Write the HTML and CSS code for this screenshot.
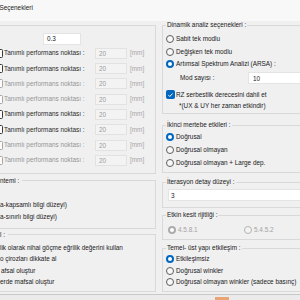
FILE: index.html
```html
<!DOCTYPE html>
<html lang="tr">
<head>
<meta charset="utf-8">
<link rel="stylesheet" href="styles.css">
</head>
<body>
<div class="header"><span class="header-title">Seçenekleri</span></div>
<div class="main">
  <div class="col-left">
    <fieldset class="box box-perf">
      <div class="top-row"><span class="field field-top">0.3</span></div>
      <div class="perf-row"><span class="check"></span><span class="perf-label">Tanımlı performans noktası :</span><span class="field field-dis">20</span><span class="unit">[mm]</span></div>
      <div class="perf-row"><span class="check"></span><span class="perf-label">Tanımlı performans noktası :</span><span class="field field-dis">20</span><span class="unit">[mm]</span></div>
      <div class="perf-row muted"><span class="check"></span><span class="perf-label">Tanımlı performans noktası :</span><span class="field field-dis">20</span><span class="unit">[mm]</span></div>
      <div class="perf-row muted"><span class="check"></span><span class="perf-label">Tanımlı performans noktası :</span><span class="field field-dis">20</span><span class="unit">[mm]</span></div>
      <div class="perf-row"><span class="check"></span><span class="perf-label">Tanımlı performans noktası :</span><span class="field field-dis">20</span><span class="unit">[mm]</span></div>
      <div class="perf-row"><span class="check"></span><span class="perf-label">Tanımlı performans noktası :</span><span class="field field-dis">20</span><span class="unit">[mm]</span></div>
      <div class="perf-row muted"><span class="check"></span><span class="perf-label">Tanımlı performans noktası :</span><span class="field field-dis">20</span><span class="unit">[mm]</span></div>
      <div class="perf-row muted"><span class="check"></span><span class="perf-label">Tanımlı performans noktası :</span><span class="field field-dis">20</span><span class="unit">[mm]</span></div>
    </fieldset>
    <fieldset class="box box-left box-method">
      <legend>ntemi :</legend>
      <div class="lrow"></div>
      <div class="lrow">a-kapsamlı bilgi düzeyi)</div>
      <div class="lrow">a-sınırlı bilgi düzeyi)</div>
    </fieldset>
    <fieldset class="box box-left box-hinge">
      <legend>l :</legend>
      <div class="hrow">lik olarak nihai göçme eğrilik değerini kullan</div>
      <div class="hrow">o çirozları dikkate al</div>
      <div class="hrow hrow-shift">afsal oluştur</div>
      <div class="hrow">erde mafsal oluştur</div>
    </fieldset>
  </div>
  <div class="col-right">
    <fieldset class="box box-right box-dyn">
      <legend>Dinamik analiz seçenekleri :</legend>
      <div class="rrow"><span class="radio"></span>Sabit tek modlu</div>
      <div class="rrow"><span class="radio"></span>Değişken tek modlu</div>
      <div class="rrow"><span class="radio on"></span>Artımsal Spektrum Analizi (ARSA) :</div>
      <div class="mod-row"><span class="mod-label">Mod sayısı :</span><span class="field field-wide">10</span></div>
      <div class="cb-row"><span class="check on"><svg viewBox="0 0 8 8" width="8" height="8"><path d="M1.6 4.1 L3.2 5.7 L6.4 2.3" fill="none" stroke="#fff" stroke-width="1.1"/></svg></span>RZ serbestlik derecesini dahil et</div>
      <div class="note-row">*(UX &amp; UY her zaman etkindir)</div>
    </fieldset>
    <fieldset class="box box-right box-second">
      <legend>İkinci mertebe etkileri :</legend>
      <div class="srow"><span class="radio on"></span>Doğrusal</div>
      <div class="srow"><span class="radio"></span>Doğrusal olmayan</div>
      <div class="srow"><span class="radio"></span>Doğrusal olmayan + Large dep.</div>
    </fieldset>
    <fieldset class="box box-right box-iter">
      <legend>İterasyon detay düzeyi :</legend>
      <div class="field field-iter">3</div>
    </fieldset>
    <fieldset class="box box-right box-sect">
      <legend>Etkin kesit rijitliği :</legend>
      <div class="sect-row">
        <span class="sect-item"><span class="radio dis on"></span>4.5.8.1</span>
        <span class="sect-item"><span class="radio dis"></span>5.4.5.2</span>
      </div>
    </fieldset>
    <fieldset class="box box-right box-found">
      <legend>Temel- üst yapı etkileşim :</legend>
      <div class="frow"><span class="radio on"></span>Etkileşimsiz</div>
      <div class="frow"><span class="radio"></span>Doğrusal winkler</div>
      <div class="frow"><span class="radio"></span>Doğrusal olmayan winkler (sadece basınç)</div>
    </fieldset>
  </div>
</div>
<div class="footer"><span class="footer-mark"></span></div>
</body>
</html>
```
FILE: styles.css
```css
* { box-sizing: border-box; }
html, body { margin: 0; padding: 0; }
body {
  width: 300px;
  height: 300px;
  overflow: hidden;
  background: #f0f0f0;
  font-family: "Liberation Sans", Arial, sans-serif;
  font-size: 6.4px;
  line-height: 8px;
  color: #1a1a1a;
}
.header {
  height: 21px;
  background: #f8f8f8;
  padding-top: 4px;
}
.header-title { display: block; margin-left: -0.5px; }

.main { display: flex; align-items: flex-start; }
.col-left { flex: none; width: 166px; margin-left: -10px; }
.col-right { flex: none; width: 160px; margin-left: 6px; }

.box {
  margin: 0;
  border: 1px solid #d9d9d9;
  min-inline-size: 0;
  padding: 0;
}
.box legend {
  padding: 0 1px;
  height: 8px;
  line-height: 8px;
}
.box-left legend { padding: 0 3px 0 0; }

/* left: performance box */
.box-perf { margin-top: 4px; padding: 6.5px 0 4.95px 3px; }
.top-row { height: 13.15px; }
.field {
  display: block;
  background: #fff;
  border: 1px solid #e4e4e4;
  line-height: 8px;
  color: #1a1a1a;
}
.field-top { width: 38px; height: 12px; margin-left: 49px; padding: 1.5px 0 0 3px; }
.perf-row { display: flex; align-items: center; height: 15.3px; color: #2a2a2a; }
.perf-row.muted { color: #969696; }
.check {
  flex: none;
  width: 9px;
  height: 9px;
  border: 1px solid #3a3a3a;
  border-radius: 1.5px;
  background: #fbfbfb;
  margin-right: 1px;
  display: flex;
  align-items: center;
  justify-content: center;
}
.perf-row.muted .check { border-color: #a6a6a6; }
.perf-label { flex: none; width: 91px; }
.field-dis {
  flex: none;
  width: 32px;
  height: 11px;
  background: #f3f3f3;
  border-color: #e2e2e2;
  color: #9c9c9c;
  padding: 1px 0 0 3px;
}
.unit { margin-left: 3px; color: #a8a8a8; }

/* left: other boxes */
.box-method { margin-top: 3px; padding: 2.5px 0 4.5px 9px; }
.lrow { height: 12px; display: flex; align-items: center; }
.box-hinge { margin-top: 2px; padding: 3.25px 0 2.75px 9px; }
.hrow { height: 11.5px; display: flex; align-items: center; }
.hrow-shift { padding-left: 1px; }

/* right column */
.box-right { padding-left: 3px; padding-right: 0; }
.radio {
  flex: none;
  width: 8px;
  height: 8px;
  border: 1px solid #5c5c5c;
  border-radius: 50%;
  background: #f8f8f8;
  margin-right: 2px;
}
.radio.on { border: 2.5px solid #0067c0; background: #fff; }
.radio.dis { border-color: #b3b3b3; background: #f3f3f3; }
.radio.dis.on { border: 2.5px solid #acacac; background: #fff; }

.box-dyn { padding-top: 4px; padding-bottom: 2px; }
.rrow { height: 12.5px; display: flex; align-items: center; }
.mod-row { height: 15.5px; display: flex; align-items: center; padding-left: 14px; }
.mod-label { flex: none; width: 68px; }
.field-wide { flex: 1; height: 12px; padding: 1.5px 0 0 4px; }
.cb-row { margin-top: 3px; height: 11px; display: flex; align-items: center; }
.check.on { background: #0067c0; border-color: #0067c0; }
.check svg { display: block; }
.note-row { height: 11px; display: flex; align-items: center; padding-left: 13px; }

.box-second { margin-top: 7px; padding-top: 1.5px; padding-bottom: 2.5px; }
.srow { height: 13px; display: flex; align-items: center; }

.box-iter { margin-top: 5px; padding-top: 3px; padding-bottom: 6px; }
.field-iter { height: 12px; margin-left: 2px; padding: 1.5px 0 0 2px; }

.box-sect { margin-top: 3px; padding-top: 5px; padding-bottom: 2.5px; }
.sect-row { height: 12px; display: flex; align-items: center; padding-left: 2px; color: #a3a3a3; }
.sect-item { flex: none; width: 76px; display: flex; align-items: center; }

.box-found { margin-top: 4.5px; padding-top: 1.25px; padding-bottom: 3.25px; }
.frow { height: 11.5px; display: flex; align-items: center; }

.footer {
  margin-top: 2px;
  height: 10px;
  border-top: 1px solid #c8c8c8;
  background: #ebebeb;
  padding-top: 2px;
}
.footer-mark {
  display: block;
  width: 14px;
  height: 3px;
  margin-left: 215px;
  background: #e9a473;
}
```
